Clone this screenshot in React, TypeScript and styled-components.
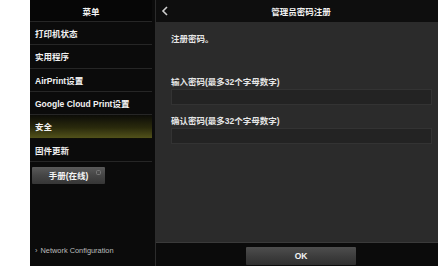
import React from "react";
import styled, { createGlobalStyle } from "styled-components";

const Global = createGlobalStyle`
  html, body { margin: 0; padding: 0; background: #ffffff; }
  * { box-sizing: border-box; }
`;

const FONT = `"Liberation Sans", "Noto Sans CJK SC", sans-serif`;

const Screen = styled.div`
  display: flex;
  width: 438px;
  height: 266px;
  overflow: hidden;
  font-family: ${FONT};
  background: #ffffff;
`;

const Blank = styled.div`
  width: 30px;
  flex: none;
  background: #ffffff;
`;

const Sidebar = styled.div`
  width: 126px;
  flex: none;
  display: flex;
  flex-direction: column;
  background: #0b0b0b;
  border-right: 1px solid #2c2c2c;
  padding-right: 3px;
`;

const SideHeader = styled.div`
  height: 22px;
  display: flex;
  align-items: center;
  justify-content: center;
  color: #f2f2f2;
  font-size: 8.5px;
  font-weight: 700;
  background: #060606;
  border-bottom: 1px solid #262626;
`;

const MenuItem = styled.div<{ $active?: boolean }>`
  height: 23.33px;
  display: flex;
  align-items: center;
  padding-left: 5px;
  color: #f2f2f2;
  font-size: 8.5px;
  font-weight: 700;
  border-bottom: 1px solid ${(p) => (p.$active ? "transparent" : "#262626")};
  background: ${(p) =>
    p.$active ? "linear-gradient(180deg, #0c0c08 0%, #2a2a0c 55%, #52521a 100%)" : "transparent"};
`;

const ManualButton = styled.div`
  position: relative;
  margin: 5px 0 0 2px;
  width: 73px;
  height: 17px;
  display: flex;
  align-items: center;
  justify-content: center;
  color: #f4f4f4;
  font-size: 8.5px;
  font-weight: 700;
  background: linear-gradient(180deg, #5a5a5a 0%, #454545 50%, #363636 100%);
  border-radius: 1px;
`;

const LinkMark = styled.svg`
  position: absolute;
  top: 3px;
  right: 4px;
`;

const Spacer = styled.div`
  flex: 1;
`;

const NetLink = styled.div`
  height: 18px;
  margin-bottom: 7px;
  display: flex;
  align-items: center;
  gap: 3px;
  padding-left: 5px;
  color: #bdbdbd;
  font-size: 7.4px;
`;

const Main = styled.div`
  flex: 1;
  display: flex;
  flex-direction: column;
  background: #2b2b2b;
`;

const MainHeader = styled.div`
  position: relative;
  height: 22px;
  flex: none;
  display: flex;
  align-items: center;
  justify-content: center;
  padding-left: 8px;
  background: #0e0e0e;
  color: #f2f2f2;
  font-size: 8.5px;
  font-weight: 700;
`;

const Back = styled.svg`
  position: absolute;
  left: 5px;
  top: 6px;
`;

const Content = styled.div`
  flex: 1;
  display: flex;
  flex-direction: column;
  padding: 11px 6px 0 15px;
`;

const Text = styled.div<{ $mt?: number }>`
  height: 12px;
  line-height: 12px;
  margin-top: ${(p) => p.$mt ?? 0}px;
  color: #e6e6e6;
  font-size: 8.5px;
  font-weight: 700;
`;

const Field = styled.div`
  height: 16px;
  margin-top: 1px;
  background: #232323;
  border: 1px solid #333333;
`;

const Footer = styled.div`
  height: 24px;
  flex: none;
  display: flex;
  align-items: center;
  justify-content: center;
  padding-left: 8px;
  background: #0b0b0b;
  border-top: 1px solid #3a3a3a;
`;

const OkButton = styled.div`
  width: 110px;
  height: 18px;
  margin-top: 2px;
  display: flex;
  align-items: center;
  justify-content: center;
  color: #f4f4f4;
  font-size: 8.5px;
  font-weight: 700;
  background: linear-gradient(180deg, #4e4e4e 0%, #3c3c3c 55%, #303030 100%);
  border-radius: 1px;
`;

const items = ["打印机状态", "实用程序", "AirPrint设置", "Google Cloud Print设置", "安全", "固件更新"];

export default function App() {
  return (
    <>
      <Global />
      <Screen>
        <Blank />
        <Sidebar>
          <SideHeader>菜单</SideHeader>
          {items.map((t) => (
            <MenuItem key={t} $active={t === "安全"}>
              {t}
            </MenuItem>
          ))}
          <ManualButton>
            手册(在线)
            <LinkMark width="5" height="5" viewBox="0 0 5 5">
              <rect x="0.5" y="0.5" width="4" height="4" rx="1" fill="none" stroke="#777" strokeWidth="1" />
            </LinkMark>
          </ManualButton>
          <Spacer />
          <NetLink>
            <span>›</span>
            <span>Network Configuration</span>
          </NetLink>
        </Sidebar>
        <Main>
          <MainHeader>
            <Back width="8" height="10" viewBox="0 0 8 10">
              <polyline points="6,1 2,5 6,9" fill="none" stroke="#cfcfcf" strokeWidth="1.6" />
            </Back>
            管理员密码注册
          </MainHeader>
          <Content>
            <Text>注册密码。</Text>
            <Text $mt={31}>输入密码(最多32个字母数字)</Text>
            <Field />
            <Text $mt={10}>确认密码(最多32个字母数字)</Text>
            <Field />
          </Content>
          <Footer>
            <OkButton>OK</OkButton>
          </Footer>
        </Main>
      </Screen>
    </>
  );
}
